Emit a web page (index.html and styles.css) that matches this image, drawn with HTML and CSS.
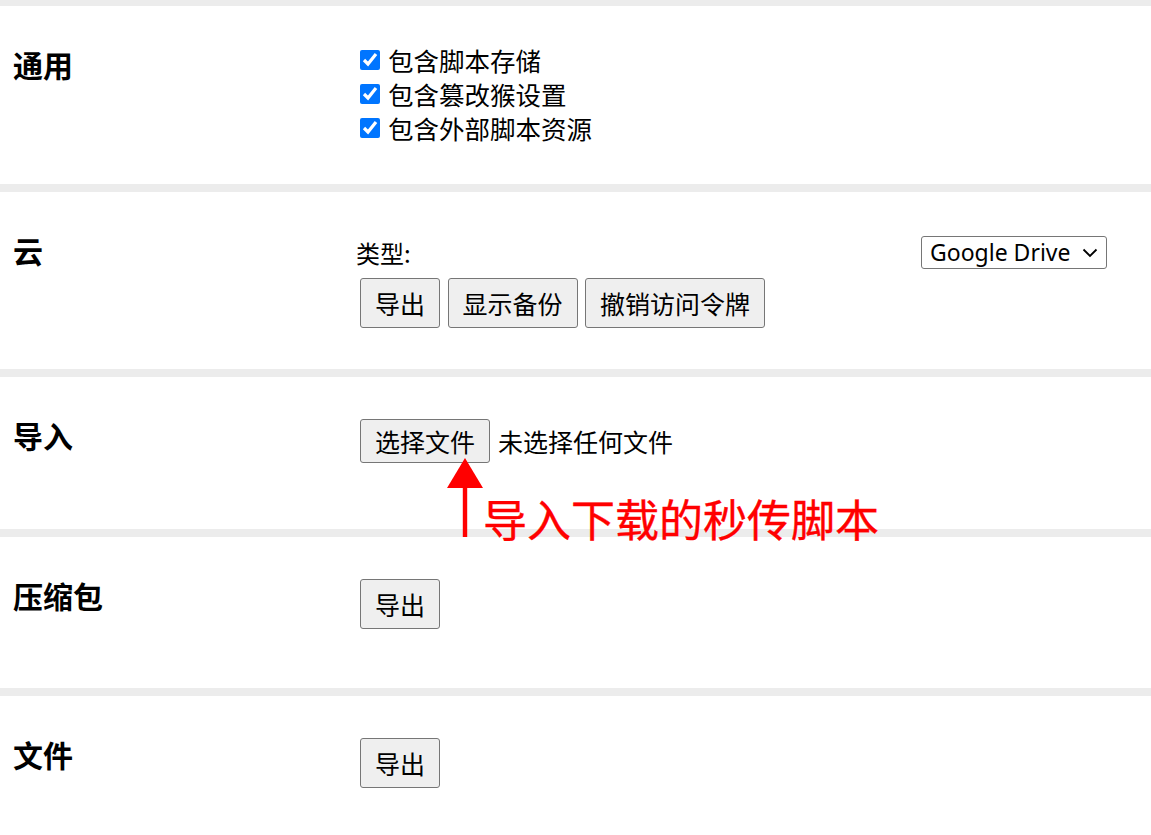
FILE: index.html
```html
<!DOCTYPE html>
<html lang="zh-CN">
<head>
<meta charset="utf-8">
<title>设置</title>
<link rel="stylesheet" href="styles.css">
</head>
<body>
<div class="page">
  <section class="sec sec-general">
    <h3 class="sec-title">通用</h3>
    <div class="sec-body body-checks">
      <label class="chk"><input type="checkbox" checked><span>包含脚本存储</span></label>
      <label class="chk"><input type="checkbox" checked><span>包含篡改猴设置</span></label>
      <label class="chk"><input type="checkbox" checked><span>包含外部脚本资源</span></label>
    </div>
  </section>
  <section class="sec sec-cloud">
    <h3 class="sec-title">云</h3>
    <div class="sec-body body-cloud">
      <div class="type-row">
        <span class="type-label">类型:</span>
        <div class="select-wrap">
          <select class="sel"><option>Google Drive</option></select>
          <svg class="chev" width="16" height="10" viewBox="0 0 16 10"><path d="M1.5 1.5 L8 8 L14.5 1.5" fill="none" stroke="#000" stroke-width="1.8"/></svg>
        </div>
      </div>
      <div class="btn-row">
        <button class="btn">导出</button>
        <button class="btn">显示备份</button>
        <button class="btn">撤销访问令牌</button>
      </div>
    </div>
  </section>
  <section class="sec sec-import">
    <h3 class="sec-title">导入</h3>
    <div class="sec-body body-btn">
      <div class="file-row">
        <button class="btn btn-file">选择文件</button>
        <span class="file-none">未选择任何文件</span>
      </div>
    </div>
  </section>
  <section class="sec sec-zip">
    <h3 class="sec-title">压缩包</h3>
    <div class="sec-body body-btn">
      <button class="btn">导出</button>
    </div>
  </section>
  <section class="sec sec-file">
    <h3 class="sec-title">文件</h3>
    <div class="sec-body body-btn">
      <button class="btn">导出</button>
    </div>
  </section>

  <div class="annot">
    <svg class="annot-arrow" width="40" height="82" viewBox="0 0 40 82"><polygon points="20,1 2,31 38,31" fill="#f00"/><rect x="17.8" y="30" width="4.4" height="50" fill="#f00"/></svg>
    <span class="annot-text">导入下载的秒传脚本</span>
  </div>
</div>
</body>
</html>
```
FILE: styles.css
```css
html, body {
  margin: 0;
  padding: 0;
  background: #fff;
}
body {
  font-family: "Noto Sans", "Noto Sans CJK SC", sans-serif;
  color: #000;
}
.page {
  position: relative;
  width: 1151px;
  min-height: 835px;
  overflow: hidden;
}
.sec {
  display: grid;
  grid-template-columns: 356px 1fr;
  align-items: start;
  border-top: 8px solid #ececec;
  padding-right: 44px;
  box-sizing: border-box;
}
.sec-general { border-top-width: 6px; height: 184px; }
.sec-cloud { height: 185px; }
.sec-import { height: 160px; }
.sec-zip { height: 159px; }
.sec-file { height: 160px; }

.sec-title {
  margin: 0;
  padding: 38px 0 0 13px;
  font-family: "Noto Sans CJK SC", sans-serif;
  font-size: 30px;
  font-weight: bold;
  line-height: 40px;
}
.sec-body {
  font-family: "Noto Sans CJK SC", sans-serif;
  font-size: 25px;
}
.body-checks {
  padding-top: 37px;
  display: flex;
  flex-direction: column;
}
.chk {
  display: flex;
  align-items: center;
  height: 34px;
  line-height: 34px;
  font-size: 25.5px;
}
.chk input {
  width: 20px;
  height: 20px;
  margin: 0 8px 0 4px;
  accent-color: #0075ff;
}
.body-cloud {
  padding-top: 44px;
}
.type-row {
  display: flex;
  justify-content: space-between;
  align-items: center;
  height: 34px;
}
.type-label {
  font-size: 24px;
  line-height: 34px;
}
.select-wrap {
  position: relative;
  width: 186px;
  height: 33px;
  margin-top: -2px;
}
.sel {
  display: block;
  appearance: none;
  -webkit-appearance: none;
  width: 186px;
  height: 33px;
  box-sizing: border-box;
  border: 1px solid #767676;
  border-radius: 3px;
  background: #fff;
  font-family: "Noto Sans", sans-serif;
  font-size: 23px;
  color: #000;
  padding: 0 0 0 8px;
  line-height: 31px;
  margin: 0;
}
.chev {
  position: absolute;
  right: 9px;
  top: 12px;
  pointer-events: none;
}
.btn-row {
  display: flex;
  gap: 7.5px;
  margin-top: 8px;
  padding-left: 4px;
}
.btn {
  font-family: "Noto Sans CJK SC", sans-serif;
  font-size: 25px;
  line-height: 36px;
  padding: 6px 14px;
  border: 1px solid #767676;
  border-radius: 3px;
  background: #efefef;
  color: #000;
  margin: 0;
}
.body-btn {
  padding-top: 42px;
  padding-left: 4px;
}
.file-row {
  display: flex;
  align-items: center;
  gap: 8px;
}
.btn-file {
  line-height: 34px;
  padding: 4px 14px;
}
.file-none {
  line-height: 34px;
}
.annot {
  position: absolute;
  left: 445px;
  top: 457px;
  display: flex;
  align-items: flex-start;
}
.annot-arrow {
  display: block;
}
.annot-text {
  margin: 36px 0 0 -2px;
  font-family: "Noto Sans CJK SC", sans-serif;
  font-size: 44px;
  font-weight: normal;
  -webkit-text-stroke: 0.4px #f00;
  line-height: 50px;
  color: #f00;
}
```
